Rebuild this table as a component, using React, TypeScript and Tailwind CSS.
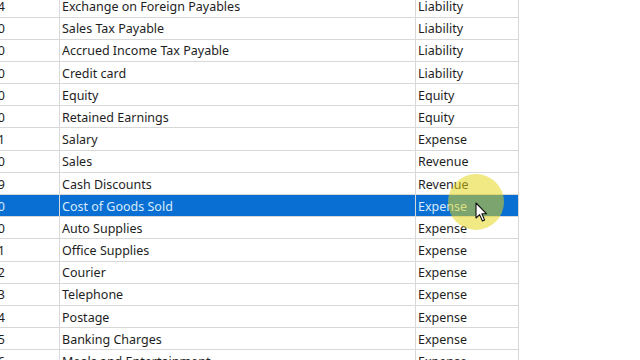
const rows = [
  { no: '2104', name: 'Exchange on Foreign Payables', type: 'Liability' },
  { no: '2200', name: 'Sales Tax Payable', type: 'Liability' },
  { no: '2300', name: 'Accrued Income Tax Payable', type: 'Liability' },
  { no: '2400', name: 'Credit card', type: 'Liability' },
  { no: '3000', name: 'Equity', type: 'Equity' },
  { no: '3100', name: 'Retained Earnings', type: 'Equity' },
  { no: '5011', name: 'Salary', type: 'Expense' },
  { no: '4000', name: 'Sales', type: 'Revenue' },
  { no: '4019', name: 'Cash Discounts', type: 'Revenue' },
  { no: '5000', name: 'Cost of Goods Sold', type: 'Expense', selected: true },
  { no: '5010', name: 'Auto Supplies', type: 'Expense' },
  { no: '5021', name: 'Office Supplies', type: 'Expense' },
  { no: '5022', name: 'Courier', type: 'Expense' },
  { no: '5023', name: 'Telephone', type: 'Expense' },
  { no: '5024', name: 'Postage', type: 'Expense' },
  { no: '5025', name: 'Banking Charges', type: 'Expense' },
  { no: '5026', name: 'Meals and Entertainment', type: 'Expense' },
];

function Cursor() {
  return (
    <svg width="14" height="21" viewBox="0 0 14 21" className="absolute left-[475px] top-[202px]">
      <path
        d="M1 1 L1 16 L4.6 12.6 L7.4 19 L9.6 18 L6.9 11.8 L11.6 11.8 Z"
        fill="#ffffff"
        stroke="#111111"
        strokeWidth="1.1"
        strokeLinejoin="round"
      />
    </svg>
  );
}

export default function App() {
  return (
    <div
      className="relative h-[360px] w-[640px] overflow-hidden bg-white text-[12.5px] text-[#1e1e1e]"
      style={{ fontFamily: '"Noto Sans", "Open Sans", sans-serif' }}
    >
      <div className="-mt-[4.7px] flex w-[519px] flex-col">
        {rows.map((r) => (
          <div
            key={r.no}
            className={`flex h-[22.2px] border-b border-[#d8d8d8] ${
              r.selected ? 'bg-[#0a6fd2] text-[#d6ebff]' : ''
            }`}
          >
            <div className="flex w-[60px] shrink-0 items-center justify-end overflow-hidden whitespace-nowrap border-r border-[#d8d8d8] pt-[3px] pr-[54px]">
              {r.no}
            </div>
            <div className="flex w-[356px] shrink-0 items-center whitespace-nowrap border-r border-[#d8d8d8] pt-[3px] pl-[2px]">
              {r.name}
            </div>
            <div className="flex w-[103px] shrink-0 items-center whitespace-nowrap border-r border-[#d8d8d8] pt-[3px] pl-[2px]">
              {r.type}
            </div>
          </div>
        ))}
      </div>

      {/* mouse highlight */}
      <div className="absolute left-[448px] top-[174px] h-[56px] w-[56px] rounded-full bg-[rgba(228,212,20,0.52)] blur-[0.6px]"></div>
      <Cursor />
    </div>
  );
}
